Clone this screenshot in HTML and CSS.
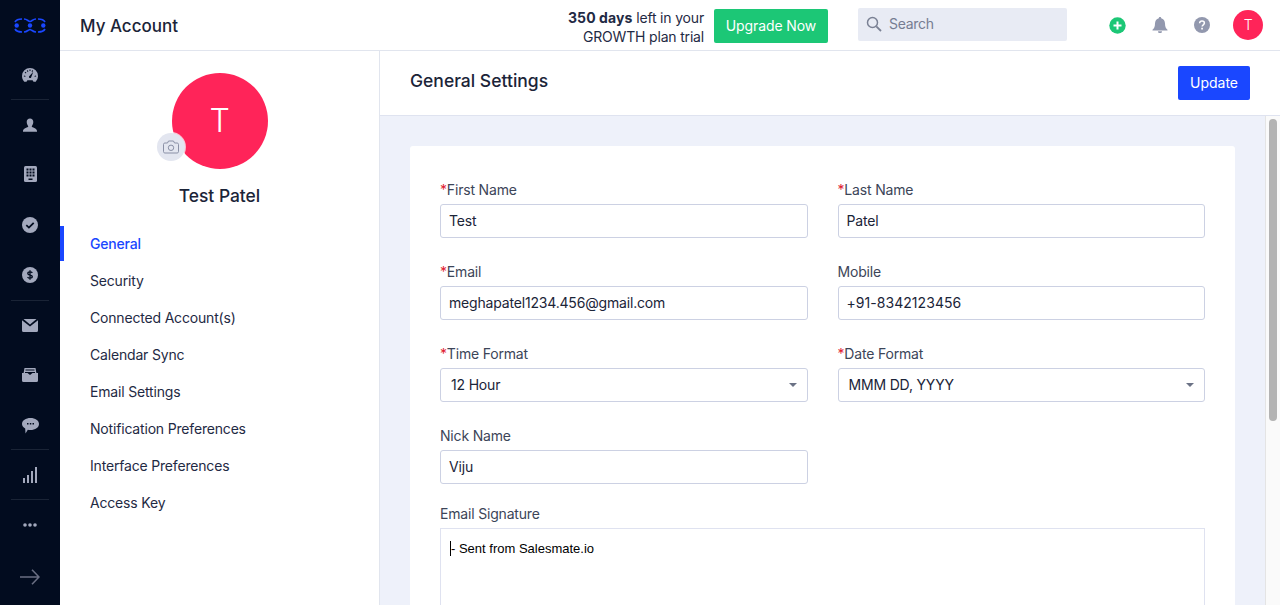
FILE: index.html
```html
<!DOCTYPE html>
<html lang="en">
<head>
    <meta charset="UTF-8">
    <meta name="viewport" content="width=device-width, initial-scale=1.0">
    <title>My Account</title>
    <link rel="stylesheet" href="styles.css">
</head>
<body>

    <aside class="rail">
        <div class="rail-item">
            <svg width="32" height="17" viewBox="0 0 32 17" fill="none">
                <circle cx="2.700" cy="8.500" r="2.200" fill="#1a47ff"/>
                <circle cx="16" cy="8.500" r="2.200" fill="#1a47ff"/>
                <circle cx="29.300" cy="8.500" r="2.200" fill="#1a47ff"/>
                <path d="M1 5C2 3 5 2 8 2M10 2C13 2 14 4 16 4.500C18 4 19 2 22 2M24 2C27 2 30 3 31 5M1 12C2 14 5 15 8 15M10 15C13 15 14 13 16 12.500C18 13 19 15 22 15M24 15C27 15 30 14 31 12" stroke="#1a47ff" stroke-width="1.700"/>
            </svg>
        </div>
        <div class="rail-item rail-sep">
            <svg width="16" height="14" viewBox="0 0 16 14"><path fill="#a3a9bd" d="M8 0a8 8 0 0 0-8 8c0 2.300.9 4.300 2.300 5.800h2.200l.9-1.500h5.200l.9 1.500h2.200A8 8 0 0 0 16 8a8 8 0 0 0-8-8z"/><path fill="#020c1f" d="M7 8.500l4.300-4.800-2.300 6a1.200 1.200 0 0 1-2-1.200zM2 7.600l1.500.3-.2.9-1.500-.2zM14 7.600l-1.500.3.2.9 1.500-.2zM3.300 3.800l1.100 1-.6.7-1.100-1zM7.500 1.600h1v1.500h-1zM10.200 2.200l.9.4-.6 1.300-.9-.4zM5.800 2.200l-.9.4.6 1.300.9-.4z"/></svg>
        </div>
        <div class="rail-item">
            <svg width="14" height="14" viewBox="0 0 14 14"><path fill="#a3a9bd" d="M7 0.500c2 0 3.300 1.500 3.300 3.500S9 7.800 8.700 8.500c0 .9 5.300 1.700 5.300 4.500v.7H0V13c0-2.800 5.300-3.600 5.300-4.500C5 7.800 3.700 6 3.700 4S5 .5 7 .5z"/></svg>
        </div>
        <div class="rail-item rail-up">
            <svg width="13" height="16" viewBox="0 0 13 16"><rect width="13" height="16" rx="1.500" fill="#a3a9bd"/><path fill="#020c1f" d="M2.500 2.500h2v2h-2zM5.500 2.500h2v2h-2zM8.500 2.500h2v2h-2zM2.500 5.500h2v2h-2zM5.500 5.500h2v2h-2zM8.500 5.500h2v2h-2zM2.500 8.500h2v2h-2zM5.500 8.500h2v2h-2zM8.500 8.500h2v2h-2zM4.500 12.500h4v1.500h-4z"/></svg>
        </div>
        <div class="rail-item">
            <svg width="16" height="16" viewBox="0 0 16 16"><circle cx="8" cy="8" r="8" fill="#a3a9bd"/><path d="M4.300 8.200l2.600 2.400 4.800-4.800" fill="none" stroke="#020c1f" stroke-width="1.800"/></svg>
        </div>
        <div class="rail-item rail-sep rail-sep-low">
            <svg width="16" height="16" viewBox="0 0 16 16"><circle cx="8" cy="8" r="8" fill="#a3a9bd"/><path d="M10.300 5.800C9.800 5 9 4.800 8 4.800c-1.300 0-2.200.6-2.200 1.600 0 2.300 4.500 1 4.500 3.200 0 1-1 1.600-2.300 1.600-1 0-2-.4-2.400-1.200M8 3.300v9.400" fill="none" stroke="#020c1f" stroke-width="1.300"/></svg>
        </div>
        <div class="rail-item">
            <svg width="16" height="13" viewBox="0 0 16 13"><path fill="#a3a9bd" d="M1.500 0L8 5.500 14.500 0H1.500zM0 1.200V11.500A1.500 1.500 0 0 0 1.500 13h13a1.500 1.500 0 0 0 1.500-1.500V1.200L8 7.500 0 1.200z"/></svg>
        </div>
        <div class="rail-item">
            <svg width="16" height="14" viewBox="0 0 16 14"><path fill="#a3a9bd" d="M2.500 0h11l.9 5H16v7.500a1.500 1.500 0 0 1-1.500 1.500h-13A1.500 1.500 0 0 1 0 12.500V5h1.600z"/><path fill="#020c1f" d="M3.500 1.500h9v1h-9zM3 4h10v1h-2.500L8 7 5.500 5H3z"/></svg>
        </div>
        <div class="rail-item rail-sep rail-down">
            <svg width="17" height="16" viewBox="0 0 17 16"><path fill="#a3a9bd" d="M8.500 0C13.200 0 17 2.500 17 6s-3.800 6-8.500 6c-1 0-1.900-.1-2.700-.3L3.500 15.500l-.3-5C1.200 9.400 0 7.800 0 6 0 2.500 3.800 0 8.500 0z"/><path fill="#020c1f" d="M5 5h1.500v1.500H5zM7.800 5h1.500v1.500H7.800zM10.500 5H12v1.500h-1.500z"/></svg>
        </div>
        <div class="rail-item rail-sep">
            <svg width="14" height="16" viewBox="0 0 14 16"><path fill="#a3a9bd" d="M0 11h2v5H0zM4 8h2v8H4zM8 4h2v12H8zM12 0h2v16h-2z"/></svg>
        </div>
        <div class="rail-item">
            <svg width="14" height="4" viewBox="0 0 14 4"><circle cx="2" cy="2" r="1.800" fill="#a3a9bd"/><circle cx="7" cy="2" r="1.800" fill="#a3a9bd"/><circle cx="12" cy="2" r="1.800" fill="#a3a9bd"/></svg>
        </div>
        <div class="rail-item rail-toggle">
            <svg width="20" height="16" viewBox="0 0 20 16"><path d="M0 8h19M12 .8L19 8l-7 7.200" fill="none" stroke="#696e82" stroke-width="1.600"/></svg>
        </div>
    </aside>

    <div class="main">
        <header class="topbar">
            <h1 class="page-title">My Account</h1>
            <p class="trial"><b>350 days</b> left in your<br>GROWTH plan trial</p>
            <a class="btn-upgrade">Upgrade Now</a>
            <div class="search">
                <svg width="16" height="16" viewBox="0 0 16 16"><circle cx="6.500" cy="6.500" r="5" fill="none" stroke="#7a8194" stroke-width="1.500"/><path d="M10.300 10.300L15 15" stroke="#7a8194" stroke-width="1.800"/></svg>
                <span>Search</span>
            </div>
            <div class="top-icons">
                <svg width="17" height="17" viewBox="0 0 17 17"><circle cx="8.500" cy="8.500" r="8.200" fill="#1cc776"/><path d="M8.500 4.500v8M4.500 8.500h8" stroke="#fff" stroke-width="2"/></svg>
                <svg width="16" height="16" viewBox="0 0 16 16"><path fill="#9298ae" d="M8 0c.8 0 1.200.5 1.200 1.200C11.500 1.800 13 3.800 13 6.500c0 3.500 1 4.800 2.500 6.300v.7H.5v-.7C2 11.300 3 10 3 6.500c0-2.700 1.500-4.700 3.800-5.300C6.800.5 7.200 0 8 0zM6 14.300h4a2 2 0 0 1-4 0z"/></svg>
                <svg width="16" height="16" viewBox="0 0 16 16"><circle cx="8" cy="8" r="8" fill="#9298ae"/><path d="M5.600 6.200C5.700 4.700 6.700 4 8 4c1.400 0 2.400.8 2.400 2 0 1.800-2.300 1.800-2.300 3.600" fill="none" stroke="#fff" stroke-width="1.500"/><path d="M7.200 10.800h1.700v1.600H7.200z" fill="#fff"/></svg>
                <span class="avatar-small">T</span>
            </div>
        </header>

        <div class="body">
            <nav class="account-nav">
                <div class="avatar-wrap">
                    <div class="avatar-big">T</div>
                    <span class="camera">
                        <svg width="16" height="14" viewBox="0 0 16 14"><path d="M1.800 3h2.700l1-2h5l1 2h2.700c.7 0 1.300.6 1.300 1.300v7.400c0 .7-.6 1.300-1.300 1.300H1.800C1.100 13 .5 12.400.5 11.700V4.300C.5 3.600 1.100 3 1.800 3z" fill="none" stroke="#8a90a6"/><circle cx="8" cy="7.800" r="2.700" fill="none" stroke="#8a90a6"/></svg>
                    </span>
                </div>
                <div class="user-name">Test Patel</div>
                <ul class="menu">
                    <li class="active">General</li>
                    <li>Security</li>
                    <li>Connected Account(s)</li>
                    <li>Calendar Sync</li>
                    <li>Email Settings</li>
                    <li>Notification Preferences</li>
                    <li>Interface Preferences</li>
                    <li>Access Key</li>
                </ul>
            </nav>

            <section class="settings">
                <div class="settings-head">
                    <h2>General Settings</h2>
                    <a class="btn-update">Update</a>
                </div>
                <div class="settings-body">
                    <div class="scroll-area">
                        <form class="card">
                            <div class="field">
                                <label><i>*</i>First Name</label>
                                <div class="input">Test</div>
                            </div>
                            <div class="field">
                                <label><i>*</i>Last Name</label>
                                <div class="input">Patel</div>
                            </div>
                            <div class="field">
                                <label><i>*</i>Email</label>
                                <div class="input">meghapatel1234.456@gmail.com</div>
                            </div>
                            <div class="field">
                                <label>Mobile</label>
                                <div class="input input-phone">+91-8342123456</div>
                            </div>
                            <div class="field">
                                <label><i>*</i>Time Format</label>
                                <div class="input select">12 Hour</div>
                            </div>
                            <div class="field">
                                <label><i>*</i>Date Format</label>
                                <div class="input select">MMM DD, YYYY</div>
                            </div>
                            <div class="field">
                                <label>Nick Name</label>
                                <div class="input">Viju</div>
                            </div>
                            <div class="field"></div>
                            <div class="field wide">
                                <label>Email Signature</label>
                                <div class="editor"><span class="caret"></span>- Sent from Salesmate.io</div>
                            </div>
                        </form>
                    </div>
                    <div class="scrollbar"><div class="thumb"></div></div>
                </div>
            </section>
        </div>
    </div>

</body>
</html>
```

FILE: styles.css
```css
* {
    box-sizing: border-box;
}
html, body {
    height: 100%;
}
body {
    margin: 0;
    display: flex;
    overflow: hidden;
    font-family: Inter, "Liberation Sans", sans-serif;
    font-size: 14px;
    letter-spacing: -0.18px;
    color: #1f2a44;
    background-color: #fff;
}
.rail {
    width: 60px;
    flex: none;
    display: flex;
    flex-direction: column;
    background-color: #020c1f;
}
.rail-item {
    height: 50px;
    flex: none;
    display: flex;
    align-items: center;
    justify-content: center;
    position: relative;
}
.rail-up svg {
    margin-bottom: 2px;
}
.rail-down svg {
    margin-top: 2px;
}
.rail-sep::after {
    content: "";
    position: absolute;
    left: 11px;
    right: 11px;
    bottom: 0;
    height: 1px;
    background-color: #1a2436;
}
.rail-sep-low::after {
    bottom: -1px;
}
.rail-toggle {
    margin-top: auto;
    margin-bottom: 3px;
}
.main {
    flex: 1;
    min-width: 0;
    display: flex;
    flex-direction: column;
}
.topbar {
    height: 51px;
    flex: none;
    display: flex;
    align-items: center;
    padding: 0 17px 0 20px;
    border-bottom: 1px solid #e1e5ee;
}
.page-title {
    margin: 1px auto 0 0;
    font-size: 17px;
    font-weight: 500;
    letter-spacing: 0;
    color: #1b2438;
}
.trial {
    margin: 3px 10px 0 0;
    font-size: 14px;
    line-height: 19px;
    text-align: right;
}
.trial b {
    font-weight: 700;
    letter-spacing: 0.1px;
}
.btn-upgrade {
    width: 114px;
    height: 34px;
    margin-top: 2px;
    line-height: 34px;
    text-align: center;
    letter-spacing: -0.1px;
    border-radius: 2px;
    background-color: #1cc776;
    color: #fff;
}
.search {
    width: 209px;
    height: 33px;
    margin: 0 0 2px 30px;
    padding: 0 0 1px 8px;
    display: flex;
    align-items: center;
    gap: 7px;
    letter-spacing: -0.3px;
    border-radius: 2px;
    background-color: #e8ebf4;
    color: #767d92;
}
.top-icons {
    display: flex;
    align-items: center;
    margin-left: 42px;
    gap: 26px;
}
.avatar-small {
    width: 30px;
    height: 30px;
    margin-left: -3px;
    border-radius: 50%;
    background-color: #ff2459;
    color: #fff;
    font-weight: 300;
    text-align: center;
    line-height: 30px;
}
.body {
    flex: 1;
    min-height: 0;
    display: flex;
}
.account-nav {
    width: 320px;
    flex: none;
    border-right: 1px solid #e1e5ee;
    padding-top: 22px;
}
.avatar-wrap {
    position: relative;
    width: 96px;
    height: 96px;
    margin: 0 auto;
}
.avatar-big {
    width: 96px;
    height: 96px;
    border-radius: 50%;
    background-color: #ff2459;
    color: #fff;
    font-size: 32px;
    font-weight: 300;
    text-align: center;
    line-height: 96px;
}
.camera {
    position: absolute;
    left: -15px;
    top: 60px;
    width: 28px;
    height: 28px;
    display: flex;
    align-items: center;
    justify-content: center;
    border-radius: 50%;
    background-color: #e3e6f0;
    box-shadow: 0 0 0 1px rgba(255, 255, 255, 0.7);
}
.user-name {
    margin-top: 16px;
    text-align: center;
    font-size: 17.4px;
    line-height: 22px;
    font-weight: 500;
    letter-spacing: 0;
    color: #1b2438;
}
.menu {
    list-style: none;
    margin: 19px 0 0;
    padding: 0;
}
.menu li {
    height: 35px;
    line-height: 35px;
    margin-bottom: 2px;
    padding-left: 30px;
}
.menu .active {
    color: #1a47ff;
    font-weight: 500;
    box-shadow: inset 4px 0 0 #1a47ff;
}
.settings {
    flex: 1;
    min-width: 0;
    display: flex;
    flex-direction: column;
}
.settings-head {
    height: 65px;
    flex: none;
    display: flex;
    align-items: center;
    justify-content: space-between;
    padding: 0 30px;
    border-bottom: 1px solid #dfe3f0;
}
.settings-head h2 {
    margin: 0 0 5px;
    font-size: 17.5px;
    font-weight: 500;
    letter-spacing: 0;
    color: #1b2438;
}
.btn-update {
    width: 72px;
    height: 34px;
    line-height: 34px;
    text-align: center;
    letter-spacing: 0;
    border-radius: 2px;
    background-color: #1a47ff;
    color: #fff;
}
.settings-body {
    flex: 1;
    min-height: 0;
    display: flex;
}
.scroll-area {
    flex: 1;
    min-width: 0;
    overflow: hidden;
    padding: 30px;
    background-color: #eef1fa;
}
.card {
    display: grid;
    grid-template-columns: 1fr 1fr;
    column-gap: 30px;
    row-gap: 24px;
    padding: 34px 30px 30px;
    border-radius: 3px;
    background-color: #fff;
}
.field label {
    display: block;
    height: 20px;
    line-height: 20px;
    margin-bottom: 4px;
    color: #3c4558;
}
.field i {
    font-style: normal;
    color: #e0202f;
}
.input {
    position: relative;
    height: 34px;
    line-height: 32px;
    padding: 0 8px;
    border: 1px solid #ccd1e3;
    border-radius: 3px;
    color: #1b2438;
}
.input-phone {
    letter-spacing: 0.05px;
}
.select {
    padding-left: 10px;
}
.select::after {
    content: "";
    position: absolute;
    right: 10px;
    top: 14px;
    border-left: 4px solid transparent;
    border-right: 4px solid transparent;
    border-top: 4px solid #6b7285;
}
.wide {
    grid-column: 1 / 3;
    margin-top: -4px;
}
.editor {
    height: 180px;
    padding: 11px 9px;
    border: 1px solid #dfe2f0;
    font-family: "Liberation Sans", Arial, sans-serif;
    font-size: 13px;
    line-height: 18px;
    letter-spacing: 0;
    color: #000;
}
.caret {
    display: inline-block;
    width: 1px;
    height: 15px;
    vertical-align: -3px;
    background-color: #000;
}
.scrollbar {
    width: 15px;
    flex: none;
    padding: 3px 3px 0;
    background-color: #fafafa;
    border-left: 1px solid #e4e4e4;
}
.thumb {
    height: 302px;
    border-radius: 4px;
    background-color: #b3b3b3;
}
```
